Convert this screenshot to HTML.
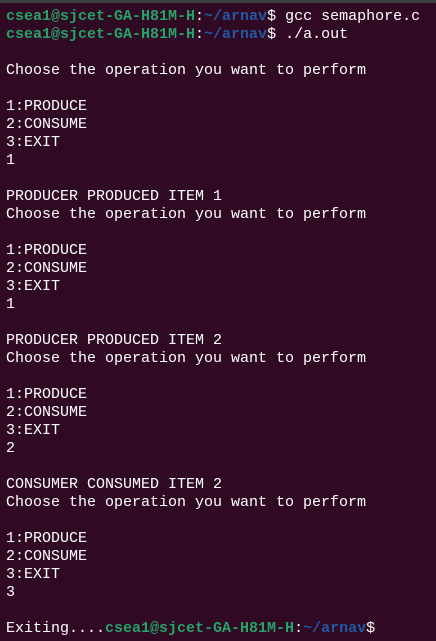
<!DOCTYPE html>
<html><head><meta charset="utf-8"><style>
html,body{margin:0;padding:0;}
body{width:436px;height:641px;background:#300a24;overflow:hidden;position:relative;}
.top{position:absolute;left:0;top:0;width:436px;height:3px;background:#3d3d3d;}
pre{position:absolute;left:6px;top:8px;margin:0;font-family:"Liberation Mono",monospace;font-size:15px;line-height:18px;color:#ffffff;}
.g{color:#26a269;font-weight:bold;}
.b{color:#2458a0;font-weight:bold;}
</style></head><body><div class="top"></div><pre><span class="g">csea1@sjcet-GA-H81M-H</span>:<span class="b">~/arnav</span>$ gcc semaphore.c
<span class="g">csea1@sjcet-GA-H81M-H</span>:<span class="b">~/arnav</span>$ ./a.out

Choose the operation you want to perform

1:PRODUCE
2:CONSUME
3:EXIT
1

PRODUCER PRODUCED ITEM 1
Choose the operation you want to perform

1:PRODUCE
2:CONSUME
3:EXIT
1

PRODUCER PRODUCED ITEM 2
Choose the operation you want to perform

1:PRODUCE
2:CONSUME
3:EXIT
2

CONSUMER CONSUMED ITEM 2
Choose the operation you want to perform

1:PRODUCE
2:CONSUME
3:EXIT
3

Exiting....<span class="g">csea1@sjcet-GA-H81M-H</span>:<span class="b">~/arnav</span>$</pre></body></html>
